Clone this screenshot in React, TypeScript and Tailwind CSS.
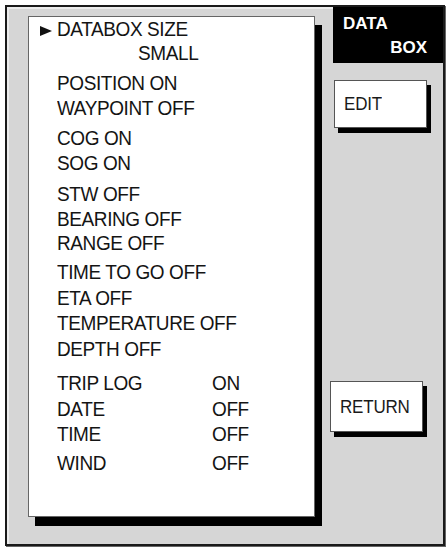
import React from "react";

type Row = { label: string; value?: string; gap: number; indent?: boolean; cursor?: boolean };

// Menu entries; `gap` is the extra spacing above each line.
const rows: Row[] = [
  { label: "DATABOX SIZE", gap: 1, cursor: true },
  { label: "SMALL", gap: 0, indent: true },
  { label: "POSITION ON", gap: 6 },
  { label: "WAYPOINT OFF", gap: 1 },
  { label: "COG ON", gap: 6 },
  { label: "SOG ON", gap: 1 },
  { label: "STW OFF", gap: 7 },
  { label: "BEARING OFF", gap: 1 },
  { label: "RANGE OFF", gap: 0 },
  { label: "TIME TO GO OFF", gap: 5 },
  { label: "ETA OFF", gap: 2 },
  { label: "TEMPERATURE OFF", gap: 1 },
  { label: "DEPTH OFF", gap: 2 },
  { label: "TRIP LOG", value: "ON", gap: 10 },
  { label: "DATE", value: "OFF", gap: 2 },
  { label: "TIME", value: "OFF", gap: 1 },
  { label: "WIND", value: "OFF", gap: 5 },
];

function Cursor() {
  return (
    <svg width="12" height="10" viewBox="0 0 12 10" className="block">
      <polygon points="0,0 12,5 0,10" fill="#111" />
    </svg>
  );
}

function SoftKey({ label, className }: { label: string; className: string }) {
  return (
    <div
      className={`w-[93px] bg-white border border-[#555] shadow-[4px_5px_0_#000] flex items-center text-[17px] tracking-[-0.2px] text-[#1a1a1a] ${className}`}
    >
      <span className="inline-block scale-y-[1.1]">{label}</span>
    </div>
  );
}

export default function App() {
  return (
    <div className="w-[448px] h-[551px] bg-white pt-[5px] pl-[5px] font-['Liberation_Sans',Arial,sans-serif]">
      <div className="w-[440px] h-[541px] border-2 border-[#1a1a1a] bg-[#d6d6d6] shadow-[1px_1px_0_#666,inset_2px_2px_0_#ececec] flex items-start">
        {/* menu list */}
        <div className="ml-[21px] mt-[9px] w-[287px] h-[501px] bg-white border border-[#666] shadow-[7px_9px_0_#000] pl-[11px] flex flex-col">
          {rows.map((r) => (
            <div
              key={r.label}
              className="flex items-center h-[24px] leading-[24px] text-[19px] tracking-[-0.4px] text-[#141414] whitespace-nowrap"
              style={{ marginTop: r.gap }}
            >
              <div className="w-[17px] flex items-center pt-[1px]">{r.cursor ? <Cursor /> : null}</div>
              {r.indent ? (
                <span className="ml-[81px] inline-block scale-y-[1.08]">{r.label}</span>
              ) : r.value ? (
                <>
                  <span className="w-[155px] inline-block scale-y-[1.08] origin-center">{r.label}</span>
                  <span className="inline-block scale-y-[1.08]">{r.value}</span>
                </>
              ) : (
                <span className="inline-block scale-y-[1.08]">{r.label}</span>
              )}
            </div>
          ))}
        </div>

        {/* soft keys */}
        <div className="ml-[15px] w-[113px] flex flex-col">
          <div className="ml-[3px] w-[110px] h-[56px] bg-black text-white font-bold text-[17px] leading-[24px] flex flex-col pt-[5px] pl-[10px] pr-[16px]">
            <span className="self-start">DATA</span>
            <span className="self-end">BOX</span>
          </div>
          <SoftKey label="EDIT" className="mt-[17px] ml-[4px] h-[48px] pl-[9px]" />
          <SoftKey label="RETURN" className="mt-[253px] h-[51px] pl-[9px]" />
        </div>
      </div>
    </div>
  );
}
